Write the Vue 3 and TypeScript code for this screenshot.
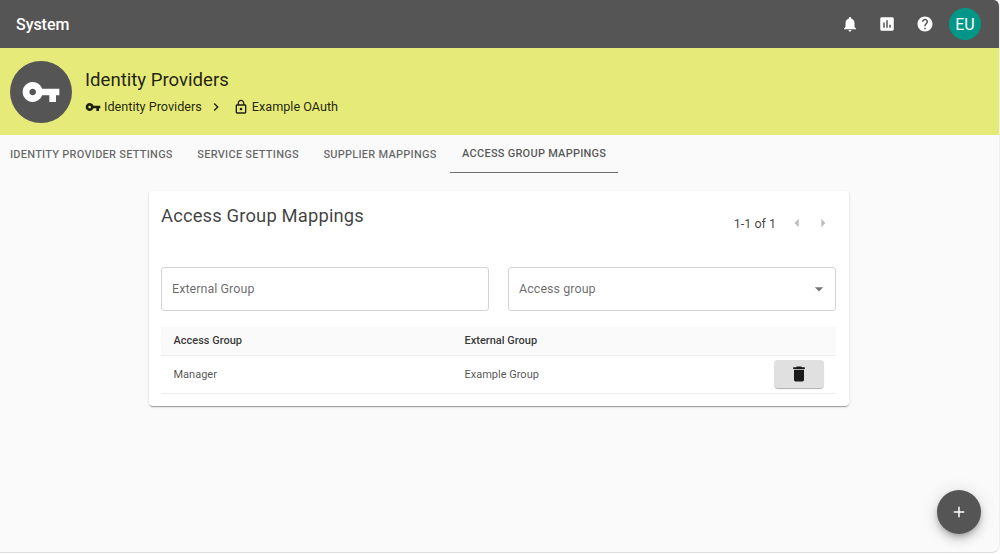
<script setup lang="ts">
const tabs = [
  { label: 'Identity Provider Settings', active: false },
  { label: 'Service Settings', active: false },
  { label: 'Supplier Mappings', active: false },
  { label: 'Access Group Mappings', active: true },
];

const mappings = [{ accessGroup: 'Manager', externalGroup: 'Example Group' }];

const keyPath = 'M12.65 10C11.83 7.67 9.61 6 7 6c-3.31 0-6 2.69-6 6s2.69 6 6 6c2.61 0 4.83-1.67 5.65-4H17v4h4v-4h2v-4H12.65zM7 14c-1.1 0-2-.9-2-2s.9-2 2-2 2 .9 2 2-.9 2-2 2z';
</script>

<template>
  <div class="page">
    <header class="app-bar">
      <div class="app-title">System</div>
      <div class="app-actions">
        <svg class="bar-icon" viewBox="0 0 24 24"><path d="M12 22c1.1 0 2-.9 2-2h-4c0 1.1.89 2 2 2zm6-6v-5c0-3.07-1.64-5.64-4.5-6.32V4c0-.83-.67-1.5-1.5-1.5s-1.5.67-1.5 1.5v.68C7.63 5.36 6 7.92 6 11v5l-2 2v1h16v-1l-2-2z" /></svg>
        <svg class="bar-icon" viewBox="0 0 24 24"><path d="M19 3H5c-1.1 0-2 .9-2 2v14c0 1.1.9 2 2 2h14c1.1 0 2-.9 2-2V5c0-1.1-.9-2-2-2zM9 17H7v-7h2v7zm4 0h-2V7h2v10zm4 0h-2v-4h2v4z" /></svg>
        <svg class="bar-icon" viewBox="0 0 24 24"><path d="M12 2C6.48 2 2 6.48 2 12s4.48 10 10 10 10-4.48 10-10S17.52 2 12 2zm1 17h-2v-2h2v2zm2.07-7.75l-.9.92C13.45 12.9 13 13.5 13 15h-2v-.5c0-1.1.45-2.1 1.17-2.83l1.24-1.26c.37-.36.59-.86.59-1.41 0-1.1-.9-2-2-2s-2 .9-2 2H8c0-2.21 1.79-4 4-4s4 1.79 4 4c0 .88-.36 1.68-.93 2.25z" /></svg>
        <div class="user-avatar">EU</div>
      </div>
    </header>

    <section class="banner">
      <div class="banner-avatar">
        <svg viewBox="0 0 24 24"><path :d="keyPath" /></svg>
      </div>
      <div class="banner-text">
        <div class="banner-title">Identity Providers</div>
        <div class="crumbs">
          <svg class="crumb-icon" viewBox="0 0 24 24"><path :d="keyPath" /></svg>
          <span>Identity Providers</span>
          <svg class="crumb-sep" viewBox="0 0 24 24"><path d="M10 6L8.59 7.41 13.17 12l-4.58 4.59L10 18l6-6z" /></svg>
          <svg class="crumb-icon lock" viewBox="0 0 24 24"><path d="M18 8h-1V6c0-2.76-2.24-5-5-5S7 3.24 7 6v2H6c-1.100 0-2 .9-2 2v10c0 1.100.9 2 2 2h12c1.100 0 2-.9 2-2V10c0-1.100-.9-2-2-2zM9 6c0-1.660 1.340-3 3-3s3 1.340 3 3v2H9V6zm9 14H6V10h12v10zm-6-3c1.100 0 2-.9 2-2s-.9-2-2-2-2 .9-2 2 .9 2 2 2z" /></svg>
          <span>Example OAuth</span>
        </div>
      </div>
    </section>

    <nav class="tabs">
      <div v-for="tab in tabs" :key="tab.label" :class="['tab', { active: tab.active }]">{{ tab.label }}</div>
    </nav>

    <main class="content">
      <div class="card">
        <div class="card-head">
          <h2>Access Group Mappings</h2>
          <div class="pager">
            <span>1-1 of 1</span>
            <svg viewBox="0 0 24 24"><path d="M14 7l-5 5 5 5V7z" /></svg>
            <svg viewBox="0 0 24 24"><path d="M10 17l5-5-5-5v10z" /></svg>
          </div>
        </div>

        <div class="fields">
          <div class="field">External Group</div>
          <div class="field">
            <span>Access group</span>
            <svg viewBox="0 0 24 24"><path d="M7 10l5 5 5-5z" /></svg>
          </div>
        </div>

        <div class="table">
          <div class="row head">
            <div>Access Group</div>
            <div>External Group</div>
            <div></div>
          </div>
          <div v-for="m in mappings" :key="m.accessGroup" class="row body">
            <div>{{ m.accessGroup }}</div>
            <div>{{ m.externalGroup }}</div>
            <div class="row-action">
              <button class="delete-btn" type="button">
                <svg viewBox="0 0 24 24"><path d="M6 19c0 1.100.9 2 2 2h8c1.100 0 2-.9 2-2V7H6v12zM19 4h-3.500l-1-1h-5l-1 1H5v2h14V4z" /></svg>
              </button>
            </div>
          </div>
        </div>
      </div>
    </main>

    <button class="fab" type="button">
      <svg viewBox="0 0 24 24"><path d="M19 13h-6v6h-2v-6H5v-2h6V5h2v6h6v2z" /></svg>
    </button>
  </div>
</template>

<style scoped>
.page {
  position: relative;
  width: 1000px;
  height: 553px;
  overflow: hidden;
  box-sizing: border-box;
  background: #fafafa;
  border-bottom: 1px solid #dcdcdc;
  border-right: 1px solid #f0f0f0;
  border-radius: 0 6px 8px 0;
  font-family: Roboto, "Liberation Sans", sans-serif;
  color: rgba(0, 0, 0, 0.87);
}

.app-bar {
  height: 48px;
  background: #555555;
  display: flex;
  align-items: center;
  justify-content: space-between;
  padding: 0 18px 0 16px;
  color: #fff;
}

.app-title {
  font-size: 16px;
  font-weight: 500;
  letter-spacing: -0.05px;
}

.app-actions {
  display: flex;
  align-items: center;
}

.bar-icon {
  width: 18px;
  height: 18px;
  fill: #fff;
  margin-right: 19.500px;
}

.bar-icon:nth-child(3) {
  margin-right: 15.500px;
}

.user-avatar {
  width: 32px;
  height: 32px;
  border-radius: 50%;
  background: #009688;
  display: flex;
  align-items: center;
  justify-content: center;
  font-size: 16px;
}

.banner {
  height: 87px;
  background: #e6ea78;
  display: flex;
  align-items: center;
  padding-left: 10px;
}

.banner-avatar {
  width: 62px;
  height: 62px;
  border-radius: 50%;
  background: #555555;
  display: flex;
  align-items: center;
  justify-content: center;
  margin-right: 13px;
}

.banner-avatar svg {
  width: 40px;
  height: 40px;
  fill: #fff;
}

.banner-text {
  display: flex;
  flex-direction: column;
  margin-top: 1px;
}

.banner-title {
  font-size: 18.600px;
  line-height: 24px;
  margin-bottom: 6px;
}

.crumbs {
  display: flex;
  align-items: center;
  font-size: 12.650px;
  line-height: 18px;
}

.crumb-icon {
  width: 16px;
  height: 16px;
  margin-right: 3px;
  fill: rgba(0, 0, 0, 0.87);
}

.crumb-sep {
  width: 16px;
  height: 16px;
  margin: 0 9px 0 6px;
  fill: rgba(0, 0, 0, 0.87);
}

.tabs {
  height: 38px;
  display: flex;
}

.tab {
  padding: 0 12px 0 10px;
  margin-right: 2.500px;
  display: flex;
  align-items: center;
  font-size: 11px;
  font-weight: 500;
  text-transform: uppercase;
  letter-spacing: 0.25px;
  color: rgba(0, 0, 0, 0.6);
}

.tab.active {
  padding: 0 12px;
  margin-left: -1px;
  border-bottom: 1.500px solid #6e6e6e;
  color: rgba(0, 0, 0, 0.68);
}

.content {
  padding: 18px 1px 0 0;
  display: flex;
  justify-content: center;
}

.card {
  width: 700px;
  height: 215px;
  box-sizing: border-box;
  padding: 12px 13px 12px 12px;
  background: #fff;
  border-radius: 4px;
  box-shadow: 0 2px 1px -1px rgba(0, 0, 0, 0.2), 0 1px 1px 0 rgba(0, 0, 0, 0.14), 0 1px 3px 0 rgba(0, 0, 0, 0.12);
}

.card-head {
  display: flex;
  justify-content: space-between;
  height: 64px;
}

.card-head h2 {
  margin: 0;
  font-size: 18.400px;
  font-weight: 400;
  line-height: 26px;
  letter-spacing: 0.15px;
  color: rgba(0, 0, 0, 0.75);
}

.pager {
  display: flex;
  align-items: center;
  height: 40px;
  font-size: 12.500px;
  padding-right: 3px;
  color: rgba(0, 0, 0, 0.75);
}

.pager span {
  margin-right: 5px;
}

.pager svg {
  width: 20px;
  height: 20px;
  margin-left: 6px;
  fill: rgba(0, 0, 0, 0.26);
}

.fields {
  display: flex;
  gap: 19px;
}

.field {
  flex: 1;
  height: 44px;
  box-sizing: border-box;
  padding: 0 10px 1px;
  border: 1px solid #d4d4d4;
  border-radius: 3px;
  display: flex;
  align-items: center;
  justify-content: space-between;
  font-size: 12.500px;
  letter-spacing: 0.05px;
  color: rgba(0, 0, 0, 0.6);
}

.field svg {
  width: 20px;
  height: 20px;
  margin-right: -4px;
  fill: rgba(0, 0, 0, 0.54);
}

.table {
  margin-top: 16px;
}

.row {
  display: grid;
  grid-template-columns: 291px 309px 1fr;
  align-items: center;
  padding-left: 12.500px;
  font-size: 11px;
}

.row.head {
  height: 28px;
  background: #fafafa;
  border-bottom: 1px solid #eeeeee;
  font-weight: 500;
  line-height: 26px;
  color: rgba(0, 0, 0, 0.8);
}

.row.body {
  height: 37px;
  border-bottom: 1px solid #eeeeee;
  color: rgba(0, 0, 0, 0.7);
}

.delete-btn {
  width: 50px;
  height: 28px;
  margin-top: -1px;
  padding: 0;
  border: 0;
  border-radius: 4px;
  background: #e0e0e0;
  box-shadow: 0 2px 1px -1px rgba(0, 0, 0, 0.2), 0 1px 1px 0 rgba(0, 0, 0, 0.14);
  display: flex;
  align-items: center;
  justify-content: center;
}

.delete-btn svg {
  width: 20px;
  height: 20px;
  fill: #1a1a1a;
}

.fab {
  position: absolute;
  left: 937px;
  top: 490px;
  width: 44px;
  height: 44px;
  padding: 0;
  border: 0;
  border-radius: 50%;
  background: #555555;
  box-shadow: 0 3px 5px -1px rgba(0, 0, 0, 0.2), 0 6px 10px 0 rgba(0, 0, 0, 0.14), 0 1px 18px 0 rgba(0, 0, 0, 0.12);
  display: flex;
  align-items: center;
  justify-content: center;
}

.fab svg {
  width: 18px;
  height: 18px;
  fill: #fff;
}
</style>
